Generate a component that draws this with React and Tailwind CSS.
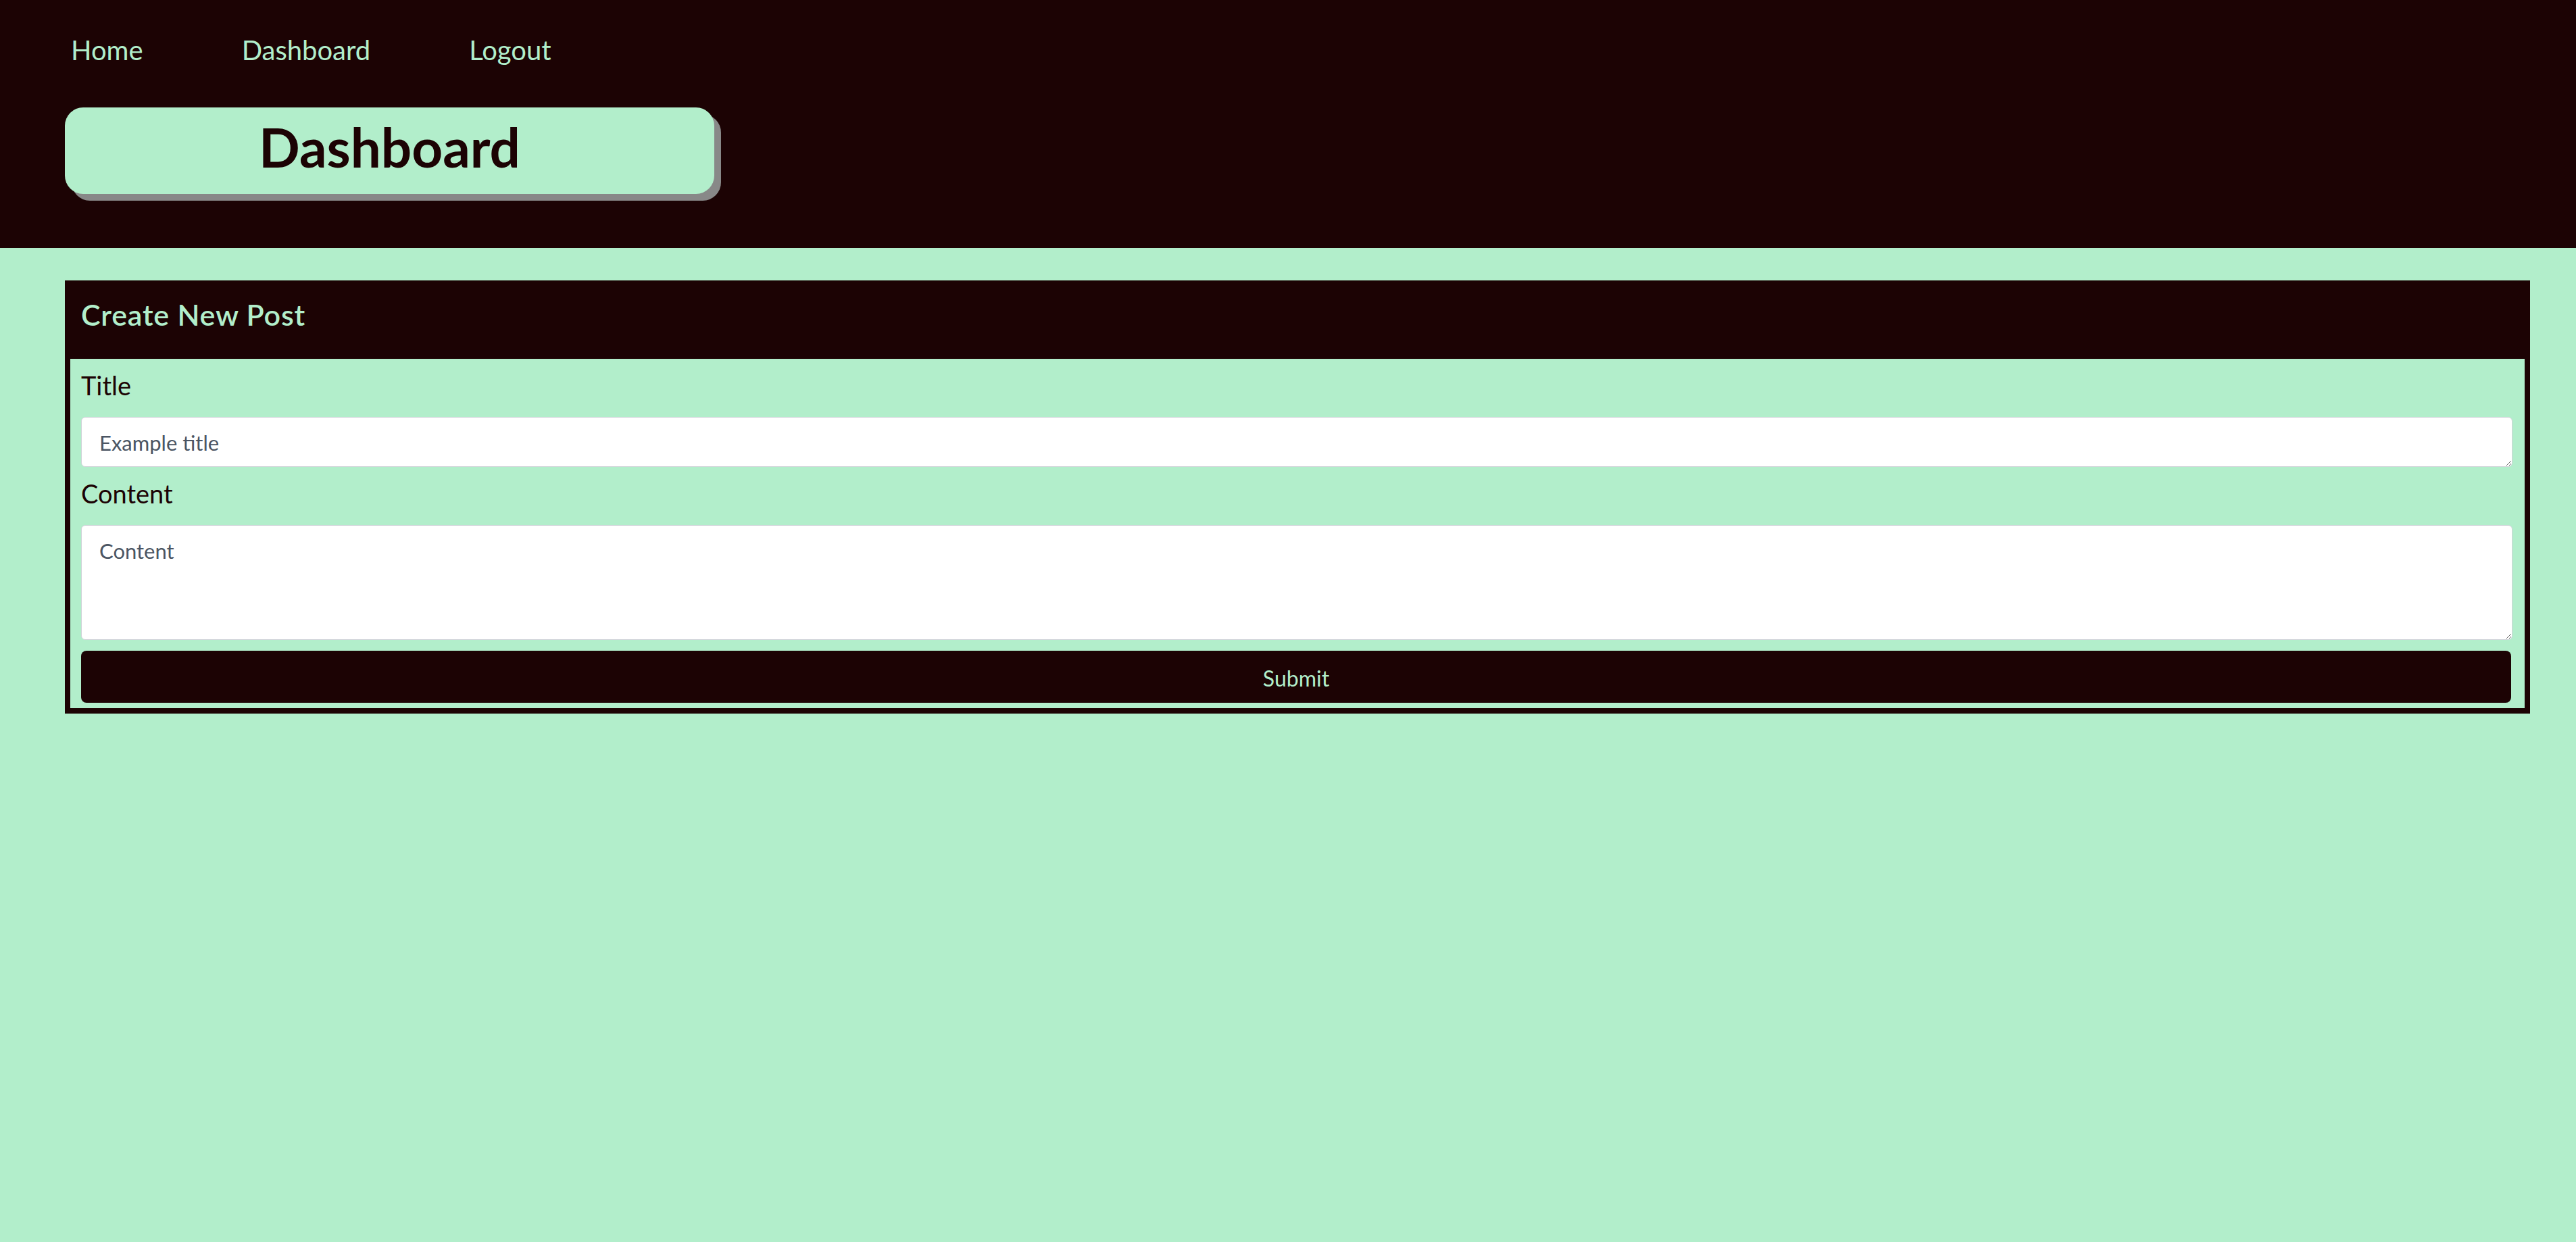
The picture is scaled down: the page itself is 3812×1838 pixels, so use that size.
export default function App() {
  const font = { fontFamily: "Lato, 'Open Sans', sans-serif" };
  return (
    <div className="min-h-[1838px] w-full bg-[#b2eecb] font-['Lato',sans-serif]" style={font}>
      <header className="bg-[#1c0304] h-[367px] flex flex-col">
        <nav className="flex gap-[146px] pl-[105px] pt-[50px]">
          <a className="text-[40px] leading-[48px] text-[#b2eecb]" href="#">Home</a>
          <a className="text-[40px] leading-[48px] text-[#b2eecb]" href="#">Dashboard</a>
          <a className="text-[40px] leading-[48px] text-[#b2eecb]" href="#">Logout</a>
        </nav>
        <div className="ml-[96px] mt-[61px] w-[961px] h-[128px] rounded-[27px] bg-[#b2eecb] shadow-[10px_10px_0_#888888] flex items-center justify-center pb-[12px]">
          <h1 className="text-[80px] leading-none font-bold text-[#1c0304]">Dashboard</h1>
        </div>
      </header>
      <main className="pt-[48px]">
        <div className="ml-[96px] w-[3648px] border-x-[8px] border-b-[8px] border-[#1c0304]">
          <div className="bg-[#1c0304] h-[116px] pt-[26px] pl-[16px]">
            <h2 className="text-[43px] leading-[50px] font-semibold tracking-[0.8px] text-[#b2eecb]">Create New Post</h2>
          </div>
          <form className="flex flex-col pt-[16px] pl-[16px] pr-[18px] pb-[8px]">
            <label className="text-[38px] leading-[46px] text-[#1c0304]">Title</label>
            <textarea
              rows={1}
              placeholder="Example title"
              className="mt-[24px] h-[74px] w-full resize rounded-[6px] border border-[#cfd3d8] bg-white pl-[26px] pt-[19px] pb-[17px] text-[31px] leading-[36px] text-[#374151] placeholder:text-[#4b5563] outline-none"
            />
            <label className="mt-[16px] text-[38px] leading-[46px] text-[#1c0304]">Content</label>
            <textarea
              placeholder="Content"
              className="mt-[24px] h-[170px] w-full resize rounded-[6px] border border-[#cfd3d8] bg-white pl-[26px] pt-[19px] text-[31px] leading-[36px] text-[#374151] placeholder:text-[#4b5563] outline-none"
            />
            <button
              type="button"
              className="mt-[16px] mr-[2px] h-[77px] rounded-[8px] bg-[#1c0304] text-[32px] leading-[38px] pt-[4px] text-[#b2eecb] flex items-center justify-center"
            >
              Submit
            </button>
          </form>
        </div>
      </main>
    </div>
  );
}
